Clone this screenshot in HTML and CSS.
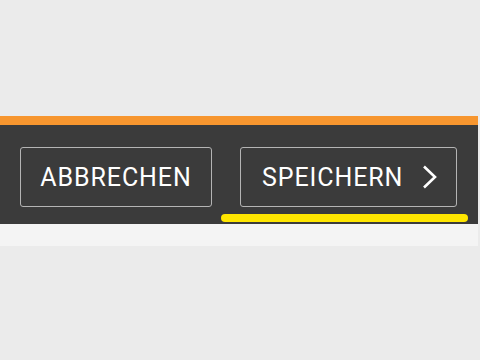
FILE: index.html
```html
<!DOCTYPE html>
<html>
<head>
    <meta charset="utf-8">
    <title>Speichern</title>
    <link rel="stylesheet" href="styles.css">
</head>
<body>
    <div class="panel">
        <div class="accent"></div>
        <div class="bar">
            <button class="btn">ABBRECHEN</button>
            <div class="save-wrap">
                <button class="btn btn-save">
                    SPEICHERN
                    <svg class="chevron" width="16" height="24" viewBox="0 0 16 24">
                        <path d="M2 1.5 L13 12 L2 22.5" fill="none" stroke="#fff" stroke-width="2.6"/>
                    </svg>
                </button>
                <span class="focus-line"></span>
            </div>
        </div>
        <div class="strip"></div>
    </div>
</body>
</html>
```

FILE: styles.css
```css
body {
    margin: 0;
    padding: 0;
    background: #ebebeb;
    font-family: Roboto, "Liberation Sans", sans-serif;
}

.panel {
    width: 478px;
    margin-top: 116px;
}

.accent {
    height: 9px;
    background: #f7962f;
}

.bar {
    height: 99px;
    box-sizing: border-box;
    background: #3b3b3b;
    padding: 22px 0 0 20px;
    display: flex;
    align-items: flex-start;
    gap: 28px;
}

.strip {
    height: 22px;
    background: #f4f4f4;
}

.btn {
    height: 60px;
    width: 192px;
    box-sizing: border-box;
    background: transparent;
    border: 1.5px solid #b4b4b4;
    border-radius: 3px;
    color: #fff;
    font-family: Roboto, "Liberation Sans", sans-serif;
    font-size: 25px;
    letter-spacing: 0.9px;
    padding: 0;
    display: flex;
    align-items: center;
    justify-content: center;
}

.save-wrap {
    position: relative;
}

.btn-save {
    width: 217px;
    justify-content: flex-start;
    padding-left: 21px;
}

.chevron {
    margin-left: 19px;
}

.focus-line {
    position: absolute;
    left: -19px;
    right: -11px;
    bottom: -15px;
    height: 8px;
    border-radius: 4px;
    background: #ffe600;
}
```
